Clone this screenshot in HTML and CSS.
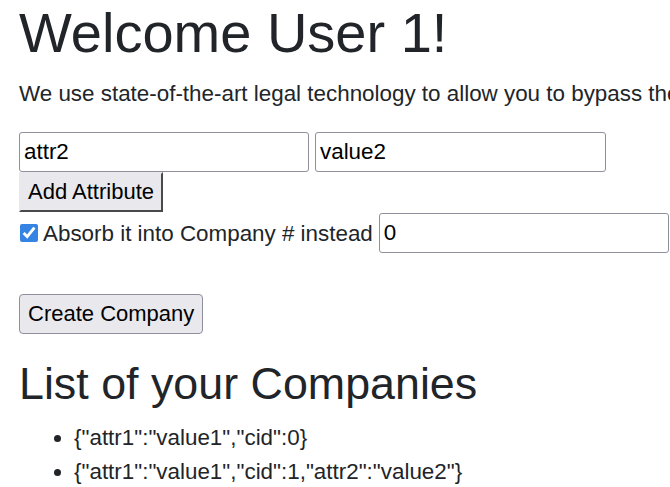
FILE: index.html
```html
<!DOCTYPE html>
<html>
<head>
<meta charset="utf-8">
<link rel="stylesheet" href="styles.css">
</head>
<body>
<div class="page">
  <h1 class="title">Welcome User 1!</h1>
  <p class="lead">We use state-of-the-art legal technology to allow you to bypass the legal requirements of founding a company.</p>
  <form class="form">
    <div class="attr-row">
      <input class="field" type="text" value="attr2">
      <input class="field" type="text" value="value2">
    </div>
    <button type="button" class="btn-outset">Add Attribute</button>
    <div class="absorb-row">
      <input class="check" type="checkbox" checked>
      <span class="absorb-label">Absorb it into Company # instead</span>
      <input class="field num" type="number" value="0">
    </div>
    <button type="button" class="btn-create">Create Company</button>
  </form>
  <h2 class="subtitle">List of your Companies</h2>
  <ul class="companies">
    <li>{"attr1":"value1","cid":0}</li>
    <li>{"attr1":"value1","cid":1,"attr2":"value2"}</li>
  </ul>
</div>
</body>
</html>
```

FILE: styles.css
```css
html, body {
  margin: 0;
  padding: 0;
  background: #fff;
  overflow: hidden;
}
body {
  font-family: "Liberation Sans", Arial, sans-serif;
  font-size: 22.4px;
  line-height: 33px;
  color: #212529;
}
.page {
  padding: 0 19px;
  white-space: nowrap;
}
.title {
  margin: 0 0 11px;
  font-size: 56px;
  font-weight: 400;
  line-height: 66px;
}
.lead {
  margin: 0 0 22px;
}
.form {
  margin: 0;
}
.attr-row {
  display: flex;
  gap: 6px;
}
.field {
  flex: none;
  box-sizing: border-box;
  width: 290px;
  height: 40px;
  margin: 0;
  padding: 1px 4px;
  border: 1px solid #8f8f9d;
  border-radius: 3px;
  background: #fff;
  font-family: "Liberation Sans", Arial, sans-serif;
  font-size: 22.4px;
  color: #000;
}
.field + .field {
  width: 291px;
}
.field.num {
  width: 290px;
}
.btn-outset {
  display: block;
  box-sizing: border-box;
  height: 40px;
  margin: 0;
  padding: 0 7px;
  border: 2px outset #e9e9ed;
  border-right-color: #9a9aa0;
  border-bottom-color: #9a9aa0;
  background: #e9e9ed;
  font-family: "Liberation Sans", Arial, sans-serif;
  font-size: 22px;
  color: #000;
}
.absorb-row {
  display: flex;
  align-items: center;
  height: 40px;
  margin-top: 1px;
}
.check {
  flex: none;
  width: 18px;
  height: 18px;
  margin: 0 5px 0 1px;
  accent-color: #3584e4;
}
.absorb-label {
  margin-right: 6px;
}
.btn-create {
  display: block;
  box-sizing: border-box;
  height: 40px;
  margin: 41px 0 0;
  padding: 0 8px;
  border: 1px solid #8f8f9d;
  border-radius: 4px;
  background: #e9e9ed;
  font-family: "Liberation Sans", Arial, sans-serif;
  font-size: 22px;
  color: #000;
}
.subtitle {
  margin: 23px 0 11px;
  font-size: 44.8px;
  font-weight: 400;
  line-height: 53px;
}
.companies {
  margin: 0;
  padding-left: 55px;
}
.companies li {
  line-height: 34px;
}
```
